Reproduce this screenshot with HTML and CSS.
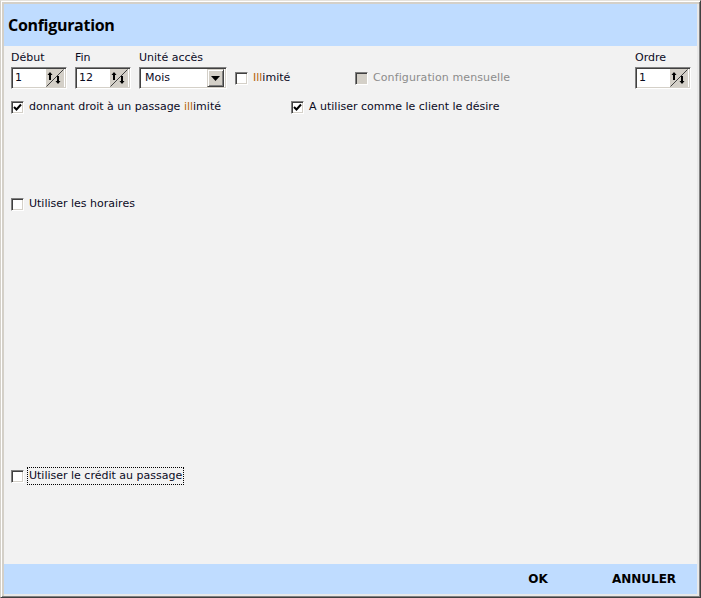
FILE: index.html
```html
<!DOCTYPE html>
<html lang="fr">
<head>
<meta charset="utf-8">
<title>Configuration</title>
<link rel="stylesheet" href="styles.css">
</head>
<body>
<div class="window">
  <div class="header"><h1 class="title">Configuration</h1></div>
  <div class="content">
    <div class="row-fields">
      <div class="field">
        <div class="label">Début</div>
        <div class="spin">
          <span class="spin-value">1</span>
          <span class="spin-btn"><svg width="18" height="18" viewBox="0 0 18 18"><line x1="0.5" y1="17.5" x2="17.5" y2="0.5" stroke="#404040" stroke-width="1"/><path d="M4 11V4" stroke="#000" stroke-width="2"/><path d="M1.5 6L4 3L6.5 6Z" fill="#000"/><path d="M12 7V14" stroke="#000" stroke-width="2"/><path d="M9.5 12L12 15L14.5 12Z" fill="#000"/></svg></span>
        </div>
      </div>
      <div class="field">
        <div class="label">Fin</div>
        <div class="spin">
          <span class="spin-value">12</span>
          <span class="spin-btn"><svg width="18" height="18" viewBox="0 0 18 18"><line x1="0.5" y1="17.5" x2="17.5" y2="0.5" stroke="#404040" stroke-width="1"/><path d="M4 11V4" stroke="#000" stroke-width="2"/><path d="M1.5 6L4 3L6.5 6Z" fill="#000"/><path d="M12 7V14" stroke="#000" stroke-width="2"/><path d="M9.5 12L12 15L14.5 12Z" fill="#000"/></svg></span>
        </div>
      </div>
      <div class="field">
        <div class="label">Unité accès</div>
        <div class="select">
          <span class="select-value">Mois</span>
          <span class="select-btn"><svg width="9" height="5" viewBox="0 0 9 5"><path d="M0 0H9L4.5 5Z" fill="#000"/></svg></span>
        </div>
      </div>
      <div class="check-item check-illimite">
        <span class="box"></span>
        <span class="check-text"><span class="ct">Ill</span>imité</span>
      </div>
      <div class="check-item check-mensuelle disabled">
        <span class="box box-disabled"></span>
        <span class="check-text">Configuration mensuelle</span>
      </div>
      <div class="field field-ordre">
        <div class="label">Ordre</div>
        <div class="spin">
          <span class="spin-value">1</span>
          <span class="spin-btn"><svg width="18" height="18" viewBox="0 0 18 18"><line x1="0.5" y1="17.5" x2="17.5" y2="0.5" stroke="#404040" stroke-width="1"/><path d="M4 11V4" stroke="#000" stroke-width="2"/><path d="M1.5 6L4 3L6.5 6Z" fill="#000"/><path d="M12 7V14" stroke="#000" stroke-width="2"/><path d="M9.5 12L12 15L14.5 12Z" fill="#000"/></svg></span>
        </div>
      </div>
    </div>

    <div class="row-checks">
      <div class="check-item col-left">
        <span class="box"><svg width="9" height="9" viewBox="0 0 9 9"><path d="M1 4L3.5 6.5L8 1.5" fill="none" stroke="#000" stroke-width="2"/></svg></span>
        <span class="check-text">donnant droit à un passage <span class="ct">ill</span>imité</span>
      </div>
      <div class="check-item">
        <span class="box"><svg width="9" height="9" viewBox="0 0 9 9"><path d="M1 4L3.5 6.5L8 1.5" fill="none" stroke="#000" stroke-width="2"/></svg></span>
        <span class="check-text">A utiliser comme le client le désire</span>
      </div>
    </div>

    <div class="check-item row-horaires">
      <span class="box"></span>
      <span class="check-text">Utiliser les horaires</span>
    </div>

    <div class="check-item row-credit">
      <span class="box"></span>
      <span class="check-text focused">Utiliser le crédit au passage</span>
    </div>
  </div>
  <div class="footer">
    <button class="btn">OK</button>
    <button class="btn">ANNULER</button>
  </div>
</div>
</body>
</html>
```

FILE: styles.css
```css
* { box-sizing: border-box; }
html, body { margin: 0; padding: 0; }
body {
  width: 701px;
  height: 598px;
  font-family: "DejaVu Sans", "Liberation Sans", sans-serif;
  font-size: 11px;
  color: #0a0a1e;
  background: #f2f2f2;
}
.window {
  width: 701px;
  height: 598px;
  display: flex;
  flex-direction: column;
  background: #f2f2f2;
  border-top: 1px solid #e6e3dd;
  border-left: 1px solid #d4d0c8;
  border-right: 1px solid #404040;
  border-bottom: 1px solid #404040;
  box-shadow: inset 1px 1px 0 #ffffff, inset -1px -1px 0 #808080, inset 3px 3px 0 #d4d0c8, inset -3px -3px 0 #e8e8e8;
  padding: 3px;
}
.header {
  height: 42px;
  background: #bfdcff;
  display: flex;
  align-items: center;
  padding-left: 4px;
  flex-shrink: 0;
}
.title {
  margin: 0;
  font-family: "Open Sans", "DejaVu Sans", sans-serif;
  font-weight: 700;
  font-size: 16px;
  letter-spacing: -0.3px;
  color: #000;
  line-height: 20px;
  padding-bottom: 1px;
}
.content {
  flex: 1;
  display: flex;
  flex-direction: column;
  padding: 5px 6px 0 7px;
}
.row-fields {
  display: flex;
  align-items: flex-end;
}
.field { display: flex; flex-direction: column; margin-right: 8px; }
.label { height: 16px; line-height: 14px; padding-left: 0; }
.field-ordre { margin-left: auto; margin-right: 0; }

.spin, .select {
  height: 22px;
  background: #fff;
  border-top: 1px solid #808080;
  border-left: 1px solid #808080;
  border-right: 1px solid #ffffff;
  border-bottom: 1px solid #ffffff;
  box-shadow: inset 1px 1px 0 #404040, inset -1px -1px 0 #d4d0c8;
  display: flex;
  align-items: center;
  padding: 2px 2px 2px 2px;
}
.spin { width: 56px; }
.spin-value { flex: 1; padding-left: 1px; line-height: 16px; }
.spin-btn {
  width: 18px;
  height: 18px;
  background: #d4d0c8;
  display: block;
}
.spin-btn svg { display: block; }
.select { width: 88px; margin-right: 0; }
.select-value { flex: 1; padding-left: 3px; line-height: 16px; }
.select-btn {
  width: 17px;
  height: 18px;
  background: #d4d0c8;
  border-top: 1px solid #d4d0c8;
  border-left: 1px solid #d4d0c8;
  border-right: 1px solid #404040;
  border-bottom: 1px solid #404040;
  box-shadow: inset 1px 1px 0 #fff, inset -1px -1px 0 #808080;
  display: flex;
  align-items: center;
  justify-content: center;
  padding-top: 1px;
}
.select-btn svg { display: block; }

.check-item {
  display: flex;
  align-items: center;
  height: 16px;
}
.check-illimite { margin-bottom: 3px; margin-left: 0; width: 120px; }
.check-mensuelle { margin-bottom: 3px; }
.box {
  width: 13px;
  height: 13px;
  flex-shrink: 0;
  background: #fff;
  border-top: 1px solid #808080;
  border-left: 1px solid #808080;
  border-right: 1px solid #ffffff;
  border-bottom: 1px solid #ffffff;
  box-shadow: inset 1px 1px 0 #404040, inset -1px -1px 0 #d4d0c8;
  display: flex;
  align-items: center;
  justify-content: center;
}
.box svg { display: block; }
.box-disabled { background: #d4d0c8; }
.check-text { margin-left: 5px; line-height: 14px; white-space: nowrap; }
.disabled .check-text { color: #8c8c8c; letter-spacing: 0.1px; }
.ct { color: #b5640c; }

.row-checks {
  display: flex;
  margin-top: 10px;
}
.col-left { width: 280px; }
.row-horaires { margin-top: 81px; }
.row-credit { margin-top: 256px; }
.focused {
  outline: 1px dotted #000;
  outline-offset: 0px;
  padding: 1px 1px 1px 1px;
  margin-left: 4px;
}

.footer {
  height: 30px;
  flex-shrink: 0;
  background: #bfdcff;
  display: flex;
  justify-content: flex-end;
  align-items: center;
  padding-right: 8px;
}
.btn {
  width: 90px;
  height: 28px;
  border: none;
  background: transparent;
  font-family: "DejaVu Sans", sans-serif;
  font-weight: 700;
  font-size: 12px;
  color: #000;
  padding: 0;
  margin-left: 16px;
}
```
